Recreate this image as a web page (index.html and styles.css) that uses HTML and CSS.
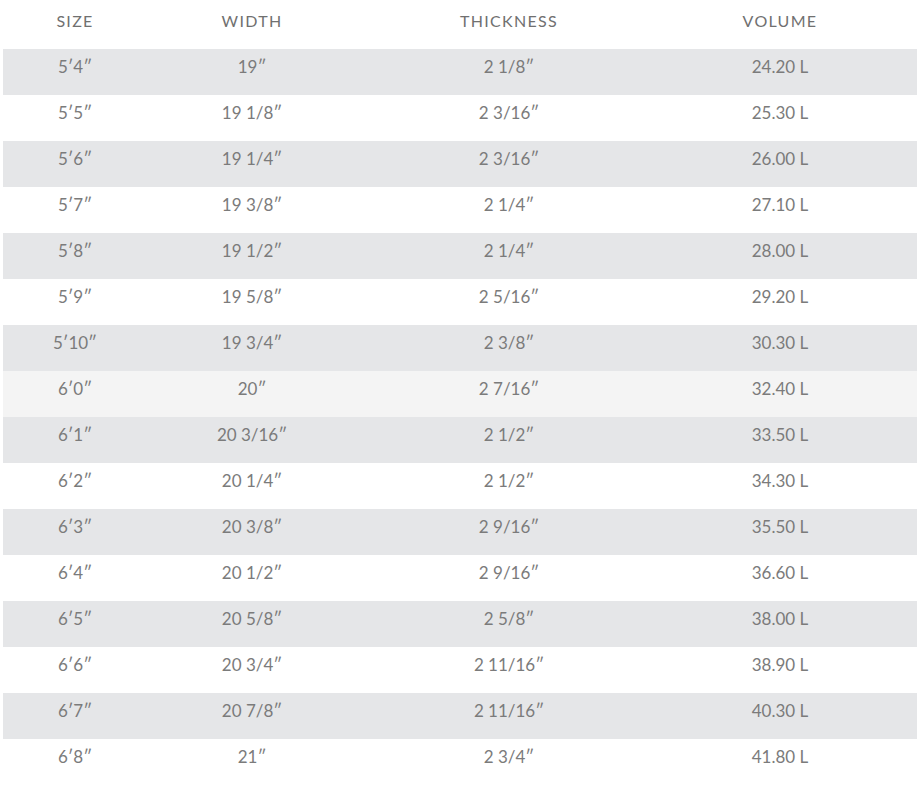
FILE: index.html
```html
<!DOCTYPE html>
<html>
<head>
<meta charset="utf-8">
<link rel="stylesheet" href="styles.css">
</head>
<body>
<table class="dims">
  <colgroup>
    <col class="c-size"><col class="c-width"><col class="c-thick"><col class="c-vol">
  </colgroup>
  <thead>
    <tr><th>SIZE</th><th>WIDTH</th><th>THICKNESS</th><th class="vol">VOLUME</th></tr>
  </thead>
  <tbody>
    <tr class="alt"><td>5′4″</td><td>19″</td><td>2 1/8″</td><td class="vol">24.20 L</td></tr>
    <tr><td>5′5″</td><td>19 1/8″</td><td>2 3/16″</td><td class="vol">25.30 L</td></tr>
    <tr class="alt"><td>5′6″</td><td>19 1/4″</td><td>2 3/16″</td><td class="vol">26.00 L</td></tr>
    <tr><td>5′7″</td><td>19 3/8″</td><td>2 1/4″</td><td class="vol">27.10 L</td></tr>
    <tr class="alt"><td>5′8″</td><td>19 1/2″</td><td>2 1/4″</td><td class="vol">28.00 L</td></tr>
    <tr><td>5′9″</td><td>19 5/8″</td><td>2 5/16″</td><td class="vol">29.20 L</td></tr>
    <tr class="alt"><td>5′10″</td><td>19 3/4″</td><td>2 3/8″</td><td class="vol">30.30 L</td></tr>
    <tr class="hover"><td>6′0″</td><td>20″</td><td>2 7/16″</td><td class="vol">32.40 L</td></tr>
    <tr class="alt"><td>6′1″</td><td>20 3/16″</td><td>2 1/2″</td><td class="vol">33.50 L</td></tr>
    <tr><td>6′2″</td><td>20 1/4″</td><td>2 1/2″</td><td class="vol">34.30 L</td></tr>
    <tr class="alt"><td>6′3″</td><td>20 3/8″</td><td>2 9/16″</td><td class="vol">35.50 L</td></tr>
    <tr><td>6′4″</td><td>20 1/2″</td><td>2 9/16″</td><td class="vol">36.60 L</td></tr>
    <tr class="alt"><td>6′5″</td><td>20 5/8″</td><td>2 5/8″</td><td class="vol">38.00 L</td></tr>
    <tr><td>6′6″</td><td>20 3/4″</td><td>2 11/16″</td><td class="vol">38.90 L</td></tr>
    <tr class="alt"><td>6′7″</td><td>20 7/8″</td><td>2 11/16″</td><td class="vol">40.30 L</td></tr>
    <tr><td>6′8″</td><td>21″</td><td>2 3/4″</td><td class="vol">41.80 L</td></tr>
  </tbody>
</table>
</body>
</html>
```
FILE: styles.css
```css
html, body {
  margin: 0;
  padding: 0;
  background: #ffffff;
}

body {
  font-family: "Lato", "Liberation Sans", sans-serif;
  overflow: hidden;
}

.dims {
  margin-left: 3px;
  width: 914px;
  border-collapse: collapse;
  border-spacing: 0;
  table-layout: fixed;
}

.c-size { width: 144px; }
.c-width { width: 210px; }
.c-thick { width: 304px; }
.c-vol { width: 256px; }

.dims th {
  height: 49px;
  box-sizing: border-box;
  padding: 11px 0 0;
  vertical-align: top;
  text-align: center;
  font-size: 16px;
  line-height: 20px;
  font-weight: 400;
  letter-spacing: 1.3px;
  color: #707070;
}

.dims td {
  height: 46px;
  box-sizing: border-box;
  padding: 8px 0 0;
  vertical-align: top;
  text-align: center;
  font-size: 17px;
  line-height: 20px;
  font-weight: 400;
  color: #7b7b7b;
}

.dims .vol {
  padding-right: 18px;
}

.dims tr.alt td {
  background: #e5e6e8;
}

.dims tr.hover td {
  background: #f4f4f4;
}
```
